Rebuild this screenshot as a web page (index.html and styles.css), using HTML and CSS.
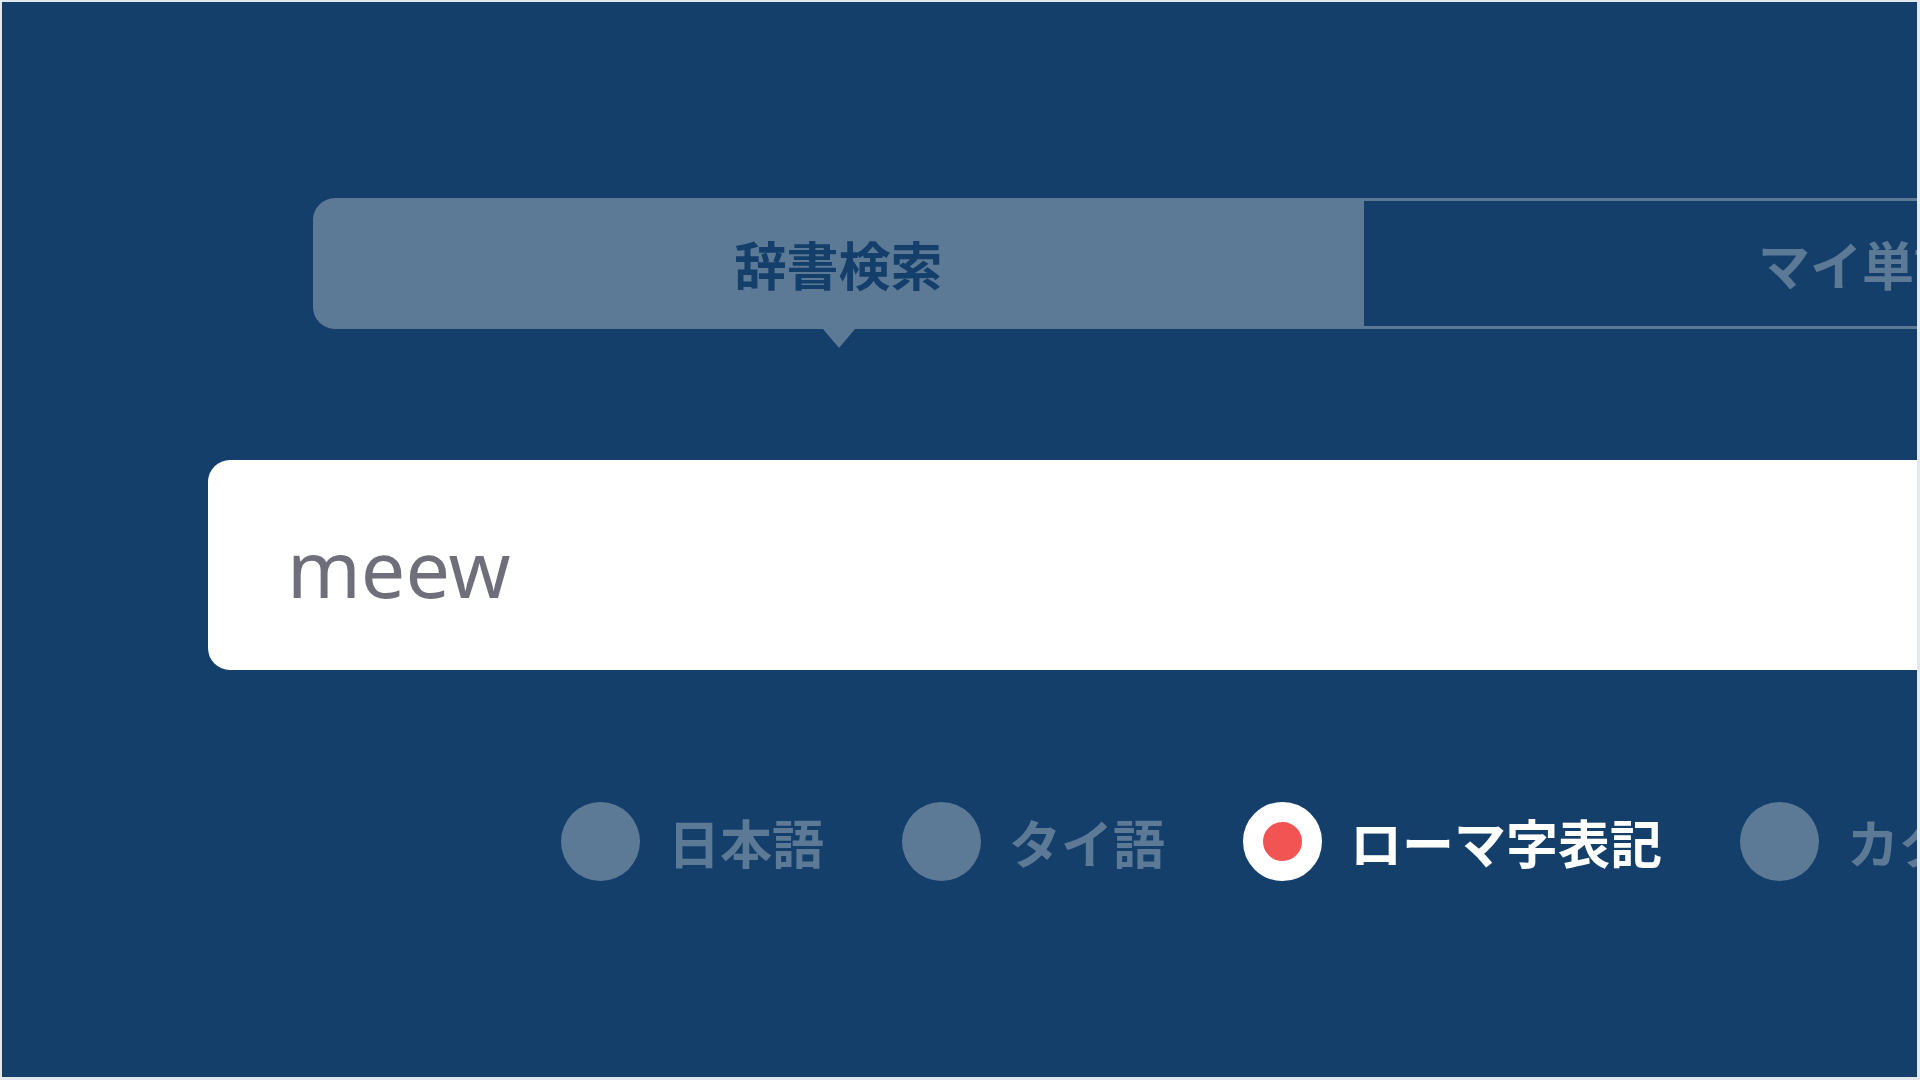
FILE: index.html
```html
<!DOCTYPE html>
<html lang="ja">
<head>
<meta charset="utf-8">
<title>辞書検索</title>
<link rel="stylesheet" href="styles.css">
</head>
<body>
<div class="frame">
  <nav class="tabs">
    <div class="tab tab-active">辞書検索</div>
    <div class="tab tab-inactive">マイ単語帳</div>
  </nav>
  <div class="search">
    <span class="query">meew</span>
  </div>
  <div class="modes">
    <div class="mode"><span class="radio"></span><span class="mode-label">日本語</span></div>
    <div class="mode"><span class="radio"></span><span class="mode-label">タイ語</span></div>
    <div class="mode mode-selected"><span class="radio"></span><span class="mode-label">ローマ字表記</span></div>
    <div class="mode"><span class="radio"></span><span class="mode-label">カタカナ</span></div>
  </div>
</div>
</body>
</html>
```

FILE: styles.css
```css
html, body {
  margin: 0;
  padding: 0;
  background: #e2e8ef;
}

.frame {
  width: 1920px;
  height: 1080px;
  box-sizing: border-box;
  border: 2px solid #e2e8ef;
  border-right-width: 3px;
  border-bottom-width: 3px;
  background: #143f6b;
  overflow: hidden;
  display: flex;
  flex-direction: column;
  align-items: flex-start;
  padding-top: 196px;
  font-family: "Noto Sans", "Noto Sans CJK JP", sans-serif;
}

.tabs {
  display: flex;
  flex: none;
  margin-left: 311px;
  height: 131px;
}

.tab {
  flex: none;
  width: 1051px;
  box-sizing: border-box;
  display: flex;
  align-items: center;
  justify-content: center;
  font-family: "Noto Sans CJK JP", sans-serif;
  font-weight: 700;
  font-size: 52px;
}

.tab-active {
  position: relative;
  background: #5c7a96;
  color: #143f6b;
  border-radius: 22px 0 0 22px;
}

.tab-active::after {
  content: "";
  position: absolute;
  left: 50%;
  bottom: -19px;
  transform: translateX(-50%);
  border-left: 16px solid transparent;
  border-right: 16px solid transparent;
  border-top: 19px solid #5c7a96;
}

.tab-inactive {
  border: 3px solid #5c7a96;
  border-left: 0;
  border-radius: 0 22px 22px 0;
  color: #5c7a96;
}

.search {
  flex: none;
  margin-top: 131px;
  margin-left: 206px;
  width: 2400px;
  height: 210px;
  box-sizing: border-box;
  padding-left: 79px;
  padding-top: 4px;
  background: #ffffff;
  border-radius: 22px;
  display: flex;
  align-items: center;
}

.query {
  font-family: "Noto Sans", sans-serif;
  font-weight: 400;
  font-size: 79px;
  color: #6f6f7b;
}

.modes {
  flex: none;
  margin-top: 132px;
  margin-left: 559px;
  display: flex;
  align-items: center;
  gap: 78px;
}

.mode {
  display: flex;
  align-items: center;
  gap: 28px;
  flex: none;
  color: #5c7a96;
  font-family: "Noto Sans CJK JP", sans-serif;
  font-weight: 700;
  font-size: 52px;
}

.radio {
  width: 79px;
  height: 79px;
  box-sizing: border-box;
  border-radius: 50%;
  background: #5c7a96;
  flex: none;
}

.mode-selected {
  color: #ffffff;
}

.mode-selected .radio {
  background: #f25353;
  border: 20px solid #ffffff;
}

.mode-label {
  white-space: nowrap;
}
```
